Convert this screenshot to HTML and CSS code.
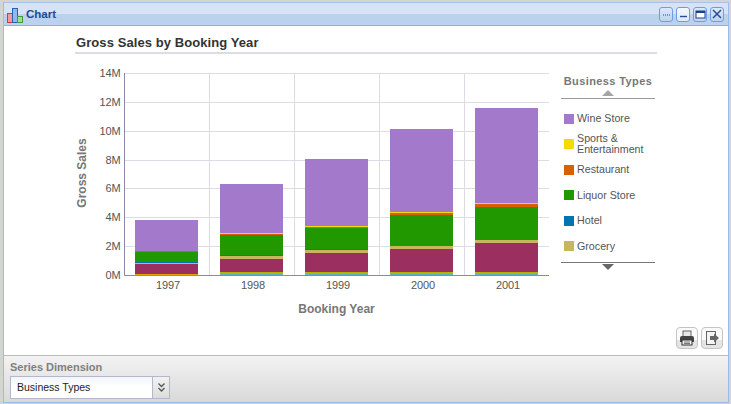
FILE: index.html
```html
<!DOCTYPE html>
<html lang="en">
<head>
<meta charset="utf-8">
<title>Chart</title>
<link rel="stylesheet" href="styles.css">
</head>
<body>
<div class="window">
  <header class="titlebar">
    <svg class="title-icon" width="17" height="17" viewBox="0 0 17 17">
      <rect x="0.5" y="6.5" width="5" height="9" fill="#f49a9a" stroke="#d23a3a"/>
      <rect x="5.5" y="1.5" width="5" height="14" fill="#8fb8ee" stroke="#2b5fb8"/>
      <rect x="10.5" y="9.5" width="5" height="6" fill="#a6d89a" stroke="#3f9a3a"/>
    </svg>
    <span class="title-text">Chart</span>
    <div class="win-buttons">
      <button class="win-btn"><svg width="9" height="9" viewBox="0 0 9 9"><path d="M1 5h1M3 5h1M5 5h1M7 5h1" stroke="#2b4a8f"/></svg></button>
      <button class="win-btn win-btn-active"><svg width="9" height="9" viewBox="0 0 9 9"><path d="M1 6.5h7" stroke="#2b4a8f" stroke-width="1.4"/></svg></button>
      <button class="win-btn"><svg width="11" height="9" viewBox="0 0 11 9"><rect x="1" y="1" width="9" height="7" fill="#fff" stroke="#1f3f88"/><path d="M1 2h9" stroke="#1f3f88" stroke-width="2"/></svg></button>
      <button class="win-btn"><svg width="10" height="10" viewBox="0 0 10 10"><path d="M1 1l8 8M9 1l-8 8" stroke="#2b4a8f" stroke-width="1.5"/></svg></button>
    </div>
  </header>

  <main class="content">
    <h1 class="chart-title">Gross Sales by Booking Year</h1>
    <div class="chart-row">
      <svg class="plot" width="478" height="262" viewBox="0 0 478 262">
        <g class="grid">
          <path d="M52 17.5H477M52 46.5H477M52 75.5H477M52 104.5H477M52 132.5H477M52 161.5H477M52 190.5H477"/>
          <path d="M137.500 17V219M222.500 17V219M307.500 17V219M392.500 17V219"/>
        </g>
        <g class="ticks">
          <text x="48.500" y="21">14M</text><text x="48.500" y="50">12M</text><text x="48.500" y="79">10M</text>
          <text x="48.500" y="108">8M</text><text x="48.500" y="136">6M</text><text x="48.500" y="165">4M</text>
          <text x="48.500" y="194">2M</text><text x="48.500" y="223">0M</text>
        </g>
        <!-- 1997 -->
        <g>
          <rect x="63" y="164" width="63" height="31" fill="#a379cc"/>
          <rect x="63" y="195" width="63" height="1" fill="#d96000"/>
          <rect x="63" y="196" width="63" height="10" fill="#229800"/>
          <rect x="63" y="206" width="63" height="1" fill="#0073b1"/>
          <rect x="63" y="207" width="63" height="1" fill="#8fc4c8"/>
          <rect x="63" y="208" width="63" height="10" fill="#9b2f5f"/>
          <rect x="63" y="218" width="63" height="1" fill="#e8a000"/>
        </g>
        <!-- 1998 -->
        <g>
          <rect x="148" y="128" width="63" height="49" fill="#a379cc"/>
          <rect x="148" y="177" width="63" height="1" fill="#f2dc00"/>
          <rect x="148" y="178" width="63" height="1" fill="#d96000"/>
          <rect x="148" y="179" width="63" height="20" fill="#229800"/>
          <rect x="148" y="199" width="63" height="1" fill="#0073b1"/>
          <rect x="148" y="200" width="63" height="3" fill="#c7b560"/>
          <rect x="148" y="203" width="63" height="13" fill="#9b2f5f"/>
          <rect x="148" y="216" width="63" height="2" fill="#b5b400"/>
          <rect x="148" y="218" width="63" height="1" fill="#5fb3c9"/>
        </g>
        <!-- 1999 -->
        <g>
          <rect x="233" y="103" width="63" height="67" fill="#a379cc"/>
          <rect x="233" y="170" width="63" height="1" fill="#f2dc00"/>
          <rect x="233" y="171" width="63" height="1" fill="#d96000"/>
          <rect x="233" y="172" width="63" height="21" fill="#229800"/>
          <rect x="233" y="193" width="63" height="1" fill="#0073b1"/>
          <rect x="233" y="194" width="63" height="3" fill="#c7b560"/>
          <rect x="233" y="197" width="63" height="19" fill="#9b2f5f"/>
          <rect x="233" y="216" width="63" height="2" fill="#b5b400"/>
          <rect x="233" y="218" width="63" height="1" fill="#5fb3c9"/>
        </g>
        <!-- 2000 -->
        <g>
          <rect x="318" y="73" width="63" height="83" fill="#a379cc"/>
          <rect x="318" y="156" width="63" height="1" fill="#f2dc00"/>
          <rect x="318" y="157" width="63" height="2" fill="#d96000"/>
          <rect x="318" y="159" width="63" height="31" fill="#229800"/>
          <rect x="318" y="190" width="63" height="3" fill="#c7b560"/>
          <rect x="318" y="193" width="63" height="23" fill="#9b2f5f"/>
          <rect x="318" y="216" width="63" height="2" fill="#b5b400"/>
          <rect x="318" y="218" width="63" height="1" fill="#5fb3c9"/>
        </g>
        <!-- 2001 -->
        <g>
          <rect x="403" y="52" width="63" height="95" fill="#a379cc"/>
          <rect x="403" y="147" width="63" height="1" fill="#f2dc00"/>
          <rect x="403" y="148" width="63" height="3" fill="#d96000"/>
          <rect x="403" y="151" width="63" height="33" fill="#229800"/>
          <rect x="403" y="184" width="63" height="3" fill="#c7b560"/>
          <rect x="403" y="187" width="63" height="29" fill="#9b2f5f"/>
          <rect x="403" y="216" width="63" height="2" fill="#b5b400"/>
          <rect x="403" y="218" width="63" height="1" fill="#5fb3c9"/>
        </g>
        <path class="axis" d="M52.500 17V219.500H477"/>
        <g class="years">
          <text x="96" y="233">1997</text><text x="181" y="233">1998</text><text x="266" y="233">1999</text>
          <text x="351" y="233">2000</text><text x="436" y="233">2001</text>
        </g>
        <text class="axis-title" x="264.500" y="257">Booking Year</text>
        <text class="axis-title" transform="translate(14 117) rotate(-90)">Gross Sales</text>
      </svg>

      <aside class="legend">
        <div class="legend-title">Business Types</div>
        <div class="legend-arrow legend-up"></div>
        <ul class="legend-list">
          <li><span class="swatch swatch-wine"></span>Wine Store</li>
          <li><span class="swatch swatch-sports"></span>Sports &amp;<br>Entertainment</li>
          <li><span class="swatch swatch-rest"></span>Restaurant</li>
          <li><span class="swatch swatch-liquor"></span>Liquor Store</li>
          <li><span class="swatch swatch-hotel"></span>Hotel</li>
          <li><span class="swatch swatch-grocery"></span>Grocery</li>
        </ul>
        <div class="legend-arrow legend-down"></div>
      </aside>
    </div>
    <div class="tools">
      <button class="tool-btn"><svg width="16" height="16" viewBox="0 0 16 16">
        <rect x="4" y="1" width="8" height="6" fill="#e8e8e8" stroke="#666"/>
        <path d="M1 8q0-2 2-2h10q2 0 2 2v4H1z" fill="#444"/>
        <rect x="3" y="10" width="10" height="5" fill="#f2f2f2" stroke="#333"/>
        <path d="M5 12h6M5 13.500h6" stroke="#777"/>
      </svg></button>
      <button class="tool-btn"><svg width="16" height="16" viewBox="0 0 16 16">
        <rect x="2.500" y="1.500" width="9" height="13" fill="#f4f4f4" stroke="#666"/>
        <path d="M6 6h4V3.500L15 8l-5 4.500V10H6z" fill="#666"/>
      </svg></button>
    </div>
  </main>

  <footer class="footer">
    <label class="footer-label">Series Dimension</label>
    <div class="select">
      <span class="select-value">Business Types</span>
      <span class="select-btn"><svg width="9" height="11" viewBox="0 0 9 11"><path d="M1.500 1.500L4.500 4.500L7.500 1.500M1.500 6L4.500 9L7.500 6" fill="none" stroke="#555" stroke-width="1.300"/></svg></span>
    </div>
  </footer>
</div>
</body>
</html>
```
FILE: styles.css
```css
* { box-sizing: border-box; }
html, body { margin: 0; padding: 0; height: 100%; }
body {
  background: #d4d4d4;
  padding: 2px 2px 1px 3px;
  font-family: "Liberation Sans", Arial, sans-serif;
  overflow: hidden;
}
.window {
  height: 401px;
  display: flex;
  flex-direction: column;
  background: #fff;
  border: 1px solid #9dbbe8;
  border-top-color: #a8c2ea;
}
.titlebar {
  height: 23px;
  flex: none;
  display: flex;
  align-items: center;
  padding: 0 3px 0 3px;
  background: linear-gradient(#d6e3f4 0, #d6e3f4 50%, #bbd1ed 50%, #bbd1ed 100%);
  border-bottom: 1px solid #8fb0e6;
}
.title-icon { flex: none; margin-top: 2px; }
.title-text {
  margin-left: 2px;
  font-size: 11.500px;
  font-weight: bold;
  color: #1f4a96;
}
.win-buttons { margin-left: auto; display: flex; gap: 3px; padding-right: 1px; }
.win-btn {
  width: 14px;
  height: 15px;
  padding: 0;
  display: flex;
  align-items: center;
  justify-content: center;
  background: linear-gradient(#dbe8f8, #bcd3f0);
  border: 1px solid #6f9de0;
  border-radius: 3px;
}
.win-btn-active { background: linear-gradient(#f4f8fd, #dbe8f8); }
.content {
  flex: 1;
  display: flex;
  flex-direction: column;
  padding: 9px 5px 6px 71px;
  min-height: 0;
}
.chart-title {
  width: 582px;
  margin: 0;
  padding-left: 1px;
  height: 19px;
  font-size: 13px;
  line-height: 16px;
  letter-spacing: 0.080px;
  font-weight: bold;
  color: #333;
  border-bottom: 2px solid #dcdce6;
}
.chart-row {
  display: flex;
  height: 262px;
}
.plot { flex: none; display: block; margin: 2px 0 0 -3px; }
.grid path { stroke: #dcdce6; fill: none; }
.axis { stroke: #8a8aa8; fill: none; }
.ticks text { font-size: 11px; letter-spacing: -0.100px; fill: #555; text-anchor: end; }
.years text { font-size: 11px; letter-spacing: -0.100px; fill: #555; text-anchor: middle; }
.axis-title { font-size: 12px; font-weight: bold; fill: #777; text-anchor: middle; }
.legend {
  width: 94px;
  margin-left: 11px;
  padding-top: 21px;
  display: flex;
  flex-direction: column;
}
.legend-title {
  font-size: 11px;
  font-weight: bold;
  color: #777;
  letter-spacing: 0.400px;
  text-align: center;
  line-height: 13px;
  white-space: nowrap;
}
.legend-arrow { width: 0; height: 0; margin: 0 auto; border-left: 6.500px solid transparent; border-right: 6.500px solid transparent; }
.legend-up { margin-top: 2px; border-bottom: 6px solid #a6a6a6; }
.legend-list {
  list-style: none;
  margin: 2px 0 0;
  padding: 7px 0 0 3px;
  border-top: 1px solid #999;
  border-bottom: 1px solid #777;
  height: 165px;
  display: flex;
  flex-direction: column;
}
.legend-list li {
  height: 25.500px;
  display: flex;
  align-items: center;
  font-size: 10.700px;
  line-height: 11px;
  color: #555;
  position: relative;
  padding-left: 13px;
}
.swatch {
  position: absolute;
  left: 0;
  top: 50%;
  width: 10px;
  height: 10px;
  margin-top: -5px;
}
.swatch-wine { background: #a379cc; }
.swatch-sports { background: #f2dc00; }
.swatch-rest { background: #d96000; }
.swatch-liquor { background: #229800; }
.swatch-hotel { background: #0073b1; }
.swatch-grocery { background: #c7b560; }
.legend-down { margin-top: 1px; border-top: 6px solid #666; }
.tools {
  display: flex;
  justify-content: flex-end;
  gap: 3px;
  margin-top: auto;
}
.tool-btn {
  width: 22px;
  height: 22px;
  padding: 0;
  display: flex;
  align-items: center;
  justify-content: center;
  background: linear-gradient(#fafafa 60%, #e4e4e4 60%);
  border: 1px solid #c4c4c4;
  border-radius: 4px;
}
.footer {
  height: 47px;
  flex: none;
  padding: 5px 0 0 6px;
  background: linear-gradient(#f2f2f2, #d9d9d9);
  border-top: 1px solid #b9bccb;
}
.footer-label {
  display: block;
  font-size: 11px;
  font-weight: bold;
  line-height: 13px;
  color: #808080;
}
.select {
  margin-top: 2px;
  width: 160px;
  height: 23px;
  display: flex;
  background: linear-gradient(#f2f6fb, #fff 50%);
  border: 1px solid #b4b8cc;
}
.select-value {
  flex: 1;
  padding-left: 6px;
  font-size: 10.500px;
  line-height: 21px;
  color: #222;
}
.select-btn {
  width: 17px;
  display: flex;
  align-items: center;
  justify-content: center;
  background: linear-gradient(#f2f2f2, #dcdcdc);
  border-left: 1px solid #b4b8cc;
}
```
